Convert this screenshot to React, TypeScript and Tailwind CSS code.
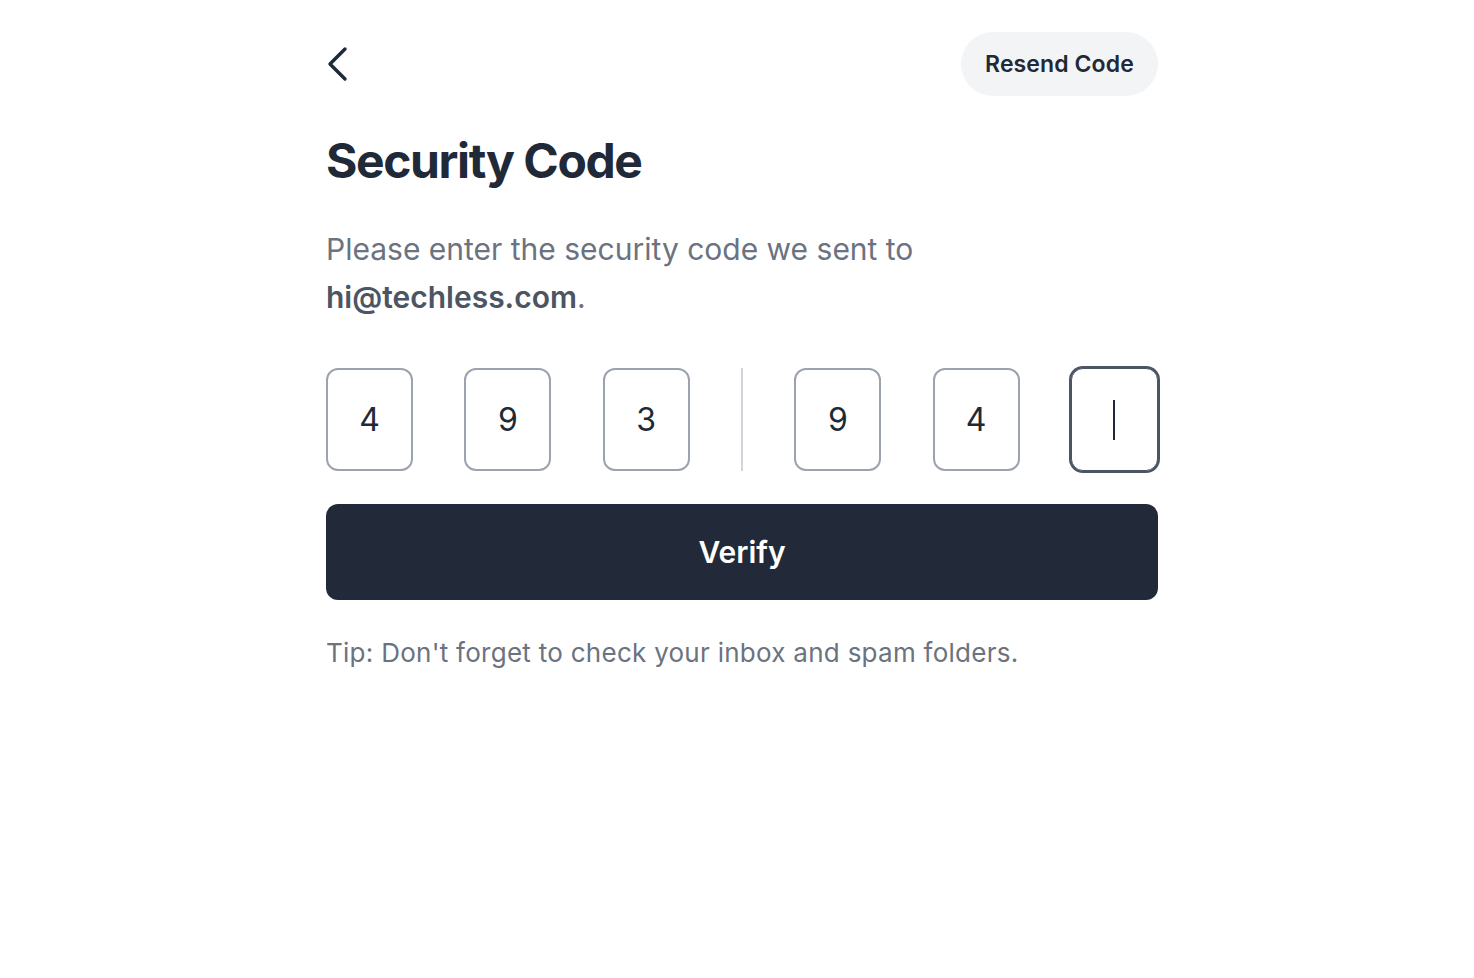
import React from 'react';

const digits = ['4', '9', '3', '9', '4'];

const CodeBox: React.FC<{ value?: string; focused?: boolean }> = ({ value, focused }) => {
  if (focused) {
    return (
      <div className="flex h-[103px] w-[87px] items-center justify-center rounded-[12px] border border-[#4b5563] bg-white ring-2 ring-[#4b5563]">
        <div className="h-[40px] w-[2px] bg-[#1f2937]" />
      </div>
    );
  }
  return (
    <div className="flex h-[103px] w-[87px] items-center justify-center rounded-[12px] border-2 border-[#9ca3af] bg-white text-[32px] text-[#1f2937]">
      {value}
    </div>
  );
};

export default function App() {
  return (
    <div className="min-h-screen bg-white font-['Inter',sans-serif]">
      <div className="flex justify-center pl-[10px]">
        <div className="flex w-[832px] flex-col pt-[32px]">
          {/* header */}
          <div className="flex h-[64px] items-center justify-between">
            <button className="flex h-[40px] w-[40px] items-center text-[#1f2937]">
              <svg width="24" height="36" viewBox="0 0 24 36" fill="none">
                <path d="M19 3 L4 18 L19 33" stroke="currentColor" strokeWidth="3.4" strokeLinecap="round" strokeLinejoin="round" />
              </svg>
            </button>
            <button className="flex h-[64px] w-[197px] items-center justify-center rounded-full bg-[#f3f4f6] text-[23px] font-semibold tracking-[0.1px] text-[#1f2937]">
              Resend Code
            </button>
          </div>

          <h1 className="mt-[41px] text-[48px] font-bold leading-[48px] tracking-[-1.4px] text-[#1f2937]">Security Code</h1>

          <p className="mt-[40px] text-[30px] leading-[48px] text-[#6b7280]">
            Please enter the security code we sent to
            <br />
            <span className="font-semibold text-[#4b5563]">hi@techless.com</span>.
          </p>

          {/* code inputs */}
          <div className="mt-[47px] flex h-[103px] items-center justify-between">
            <CodeBox value={digits[0]} />
            <CodeBox value={digits[1]} />
            <CodeBox value={digits[2]} />
            <div className="h-[103px] w-[2px] bg-[#d1d5db]" />
            <CodeBox value={digits[3]} />
            <CodeBox value={digits[4]} />
            <CodeBox focused />
          </div>

          <button className="mt-[33px] flex h-[96px] w-full items-center justify-center rounded-[12px] bg-[#222938] text-[30px] font-semibold text-white">
            Verify
          </button>

          <p className="mt-[35px] text-[26px] leading-[36px] tracking-[0.27px] text-[#6b7280]">
            Tip: Don't forget to check your inbox and spam folders.
          </p>
        </div>
      </div>
    </div>
  );
}
